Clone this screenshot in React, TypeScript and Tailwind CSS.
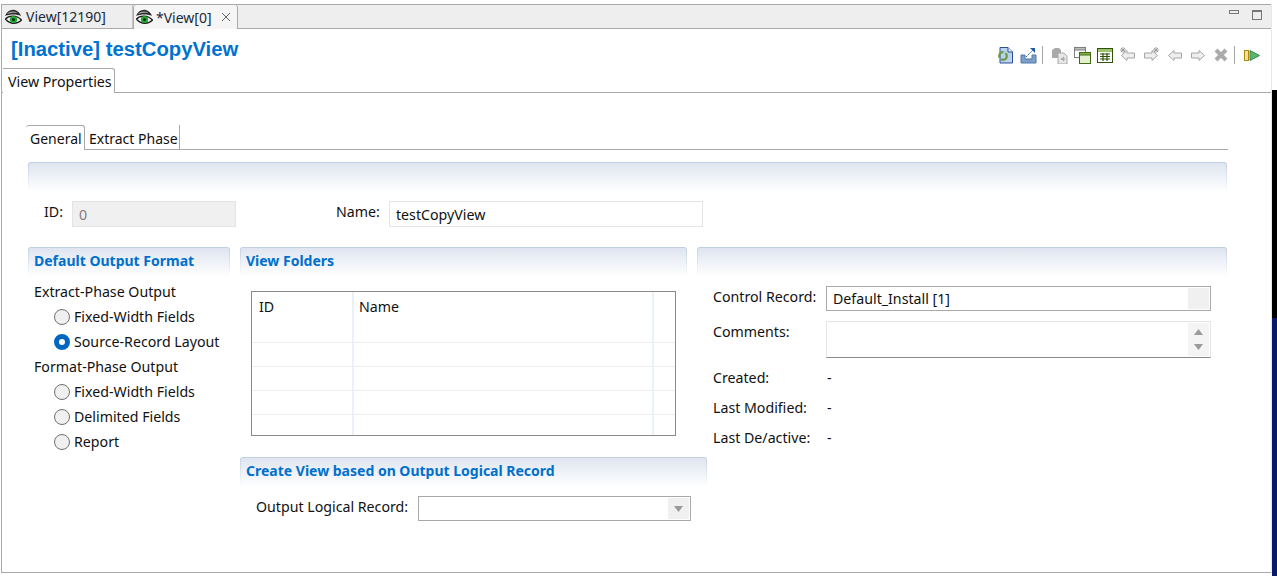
const font = { fontFamily: '"Noto Sans", sans-serif' };

function Eye() {
  return (
    <svg width="17" height="16" viewBox="0 0 17 16" className="shrink-0">
      <path d="M0 7 C2 2 6 0 10 1 C13 2 15 4 16 7 C12 5 5 5 0 7Z" fill="#2c2c2c" />
      <path d="M2 5 C5 2 9 2 13 4 C9 3.5 6 4 2 5Z" fill="#a8a8a8" />
      <path d="M0.5 10 C4 6 12 6 16.5 11 C13 15 5 16 0.5 10Z" fill="#f4f4f4" stroke="#1c1c1c" strokeWidth="1.3" />
      <circle cx="8.5" cy="10.5" r="3.6" fill="#23a32f" />
      <circle cx="8.5" cy="10.5" r="1.5" fill="#04330a" />
    </svg>
  );
}

function Close() {
  return (
    <svg width="10" height="10" viewBox="0 0 10 10" className="shrink-0">
      <path d="M1 1 L9 9 M9 1 L1 9" stroke="#666" strokeWidth="1" fill="none" />
    </svg>
  );
}

function GrayArrow({ dir, star }: { dir: 'left' | 'right'; star?: boolean }) {
  return (
    <svg width="16" height="16" viewBox="0 0 16 16" className={dir === 'right' ? '-scale-x-100' : ''}>
      <path d="M1.5 8.5 L7 3.5 V6 H14.5 V11 H7 V13.5Z" fill="#eeeeee" stroke="#a6a6a6" strokeWidth="1" />
      {star && <path d="M1 1 L5 5 M5 1 L1 5 M3 0 V6 M0 3 H6" stroke="#9e9e9e" strokeWidth="1" />}
    </svg>
  );
}

function Sep() {
  return <div className="w-px h-[18px] bg-[#a5a5a5]" />;
}

function Toolbar() {
  return (
    <div className="flex items-center h-[18px] mt-[13px]">
      <svg width="17" height="17" viewBox="0 0 17 17">
        <path d="M3 .5 H11 L15.5 5 V16 H3Z" fill="#b8d2ef" stroke="#2f4f9a" />
        <path d="M11 .5 V5 H15.5" fill="#e8f0fa" stroke="#2f4f9a" />
        <circle cx="6" cy="9" r="3.8" fill="none" stroke="#6f9a3a" strokeWidth="2.2" strokeDasharray="8 2" />
      </svg>
      <svg width="17" height="17" viewBox="0 0 17 17" className="ml-[6px]">
        <path d="M1 8 H5 V12 H12 V8 H16 V16 H1Z" fill="#7f9fc8" stroke="#4f78ad" />
        <path d="M6 10 L13 3" stroke="#1f5f9f" strokeDasharray="2 1" />
        <path d="M10 1 H15 V6Z" fill="#1f5f9f" />
      </svg>
      <div className="ml-[5px]"><Sep /></div>
      <svg width="17" height="17" viewBox="0 0 17 17" className="ml-[8px]">
        <path d="M1 3 L4 1 H8 L10 3 V11 H1Z" fill="#a9a9a9" />
        <path d="M7 6 H13 L16 9 V17 H7Z" fill="#e6e6e6" stroke="#a9a9a9" />
        <path d="M10 11 H12 V9 L14 12 L12 15 V13 H10Z" fill="#a9a9a9" />
      </svg>
      <svg width="17" height="17" viewBox="0 0 17 17" className="ml-[6px]">
        <rect x=".5" y=".5" width="11" height="10" fill="#fff" stroke="#7d7d7d" />
        <rect x=".5" y=".5" width="11" height="2.5" fill="#bdbdbd" stroke="#7d7d7d" />
        <rect x="5.5" y="5.5" width="11" height="11" fill="#e6efd0" stroke="#3f6b12" />
        <rect x="5.5" y="5.5" width="11" height="2.5" fill="#86b14a" stroke="#3f6b12" />
      </svg>
      <svg width="16" height="15" viewBox="0 0 16 15" className="ml-[6px]">
        <rect x=".5" y=".5" width="15" height="14" fill="#fff" stroke="#2f5208" />
        <rect x="1" y="1" width="14" height="3" fill="#9cc26a" />
        <path d="M3 6 H13 M3 8.5 H13 M3 11 H13 M6 5 V13 M10 5 V13" stroke="#2f5208" strokeWidth="1.2" />
      </svg>
      <div className="ml-[7px]"><GrayArrow dir="left" star /></div>
      <div className="ml-[7px]"><GrayArrow dir="right" star /></div>
      <div className="ml-[8px]"><GrayArrow dir="left" /></div>
      <div className="ml-[7px]"><GrayArrow dir="right" /></div>
      <svg width="14" height="14" viewBox="0 0 14 14" className="ml-[8px]">
        <path d="M2 2 L12 12 M12 2 L2 12" stroke="#ababab" strokeWidth="4" />
      </svg>
      <div className="ml-[6px]"><Sep /></div>
      <svg width="16" height="11" viewBox="0 0 16 11" className="ml-[9px]">
        <rect x=".5" y=".5" width="4" height="10" fill="#f4df9a" stroke="#b08a10" />
        <path d="M6 .5 L15.5 5.5 L6 10.5Z" fill="#5cb36a" stroke="#2f8a5a" />
      </svg>
    </div>
  );
}

function SectionHead({ title, className }: { title?: string; className: string }) {
  return (
    <div className={`rounded-t-[3px] bg-gradient-to-b from-[#bfcfdf] to-white px-px pt-px ${className}`}>
      <div className="h-full rounded-t-[2px] bg-gradient-to-b from-[#dfe5f0] to-white pl-[5px] pt-[2px] text-[14px] leading-[22px] font-bold text-[#0070cc]">
        {title}
      </div>
    </div>
  );
}

function Radio({ label, checked }: { label: string; checked?: boolean }) {
  return (
    <div className="flex items-center h-[25px] pl-[20px] gap-[4px]">
      {checked ? (
        <span className="w-4 h-4 rounded-full border-[5px] border-[#0067c0] bg-white" />
      ) : (
        <span className="w-4 h-4 rounded-full border border-[#707070] bg-[#f0f0f0]" />
      )}
      <span>{label}</span>
    </div>
  );
}

function TableRow({ last }: { last?: boolean }) {
  return (
    <div className={`flex h-[24px] ${last ? '' : 'border-b border-[#eeeeee]'}`}>
      <div className="w-[102px] border-r-2 border-[#eaf0f8]" />
      <div className="w-[300px] border-r-2 border-[#eaf0f8]" />
    </div>
  );
}

function Info({ label, top }: { label: string; top: string }) {
  return (
    <div className={`flex leading-[20px] ${top}`}>
      <span className="w-[114px]">{label}</span>
      <span>-</span>
    </div>
  );
}

function Triangle({ up }: { up?: boolean }) {
  return (
    <svg width="9" height="6" viewBox="0 0 9 6">
      <path d={up ? 'M4.5 0 L9 6 H0Z' : 'M0 0 H9 L4.5 6Z'} fill="#9a9a9a" />
    </svg>
  );
}

export default function App() {
  return (
    <div className="flex w-[1277px] h-[576px] bg-white text-[14.2px] text-[#111]" style={font}>
      <div className="w-px" />
      <div className="w-[1270px] h-[569px] mt-[4px] border-t border-l border-b border-[#a9a9a9] flex flex-col">
        {/* editor tabs */}
        <div className="h-[24px] bg-[#eeeeee] border-b border-[#a9a9a9] flex items-stretch shrink-0">
          <div className="w-[131px] flex items-center pl-[3px] gap-[4px] border-r border-[#c4c4c4]">
            <Eye />
            <span className="text-[#1a2a3a] text-[14px]">View[12190]</span>
          </div>
          <div className="w-[105px] h-[24px] flex items-center pl-[2px] bg-[#f5f5f5] border-x border-[#a9a9a9] rounded-t-[3px] gap-[3px]">
            <Eye />
            <span className="text-[#1a2a3a] text-[14px]">*View[0]</span>
            <span className="ml-[6px]"><Close /></span>
          </div>
          <div className="ml-auto flex items-start pt-[5px] pr-[9px] gap-[13px]">
            <div className="w-[10px] h-[4px] border border-[#777]" />
            <div className="w-[10px] h-[10px] border border-[#777] border-t-2" />
          </div>
        </div>

        {/* title + toolbar */}
        <div className="h-[39px] flex items-center justify-between pl-[9px] pr-[11px] shrink-0">
          <h1 className="text-[20.3px] font-bold text-[#0072d2] mt-[2px]" style={{ fontFamily: '"Liberation Sans", sans-serif' }}>
            [Inactive] testCopyView
          </h1>
          <Toolbar />
        </div>

        {/* View Properties tab */}
        <div className="h-[25px] flex shrink-0 border-b border-[#a9a9a9]">
          <div className="ml-px w-[112px] h-[25px] pl-[5px] leading-[25px] border-t border-r border-[#a9a9a9] rounded-tr-[3px] bg-white">
            View Properties
          </div>
        </div>

        <div className="flex-1 pl-[26px] pt-[32px] w-[1226px]">
          {/* General / Extract Phase */}
          <div className="h-[25px] -ml-[2px] w-[1202px] flex border-b border-[#a9a9a9] text-[14px]">
            <div className="w-[59px] h-[25px] pl-[4px] leading-[25px] border-t border-r border-[#a9a9a9] rounded-t-[3px] bg-white">General</div>
            <div className="w-[95px] pl-[4px] leading-[27px] border-r border-[#a9a9a9]">Extract Phase</div>
          </div>

          <SectionHead className="mt-[12px] h-[30px] w-[1199px]" />

          <div className="flex items-center h-[26px] mt-[9px]">
            <span className="w-[44px] pl-[16px] -mt-[4px]">ID:</span>
            <div className="w-[164px] h-[26px] bg-[#f0f0f0] border border-[#e4e4e4] pl-[6px] leading-[26px] text-[#808080]">0</div>
            <span className="ml-[100px] w-[53px] -mt-[4px]">Name:</span>
            <div className="w-[314px] h-[26px] border border-[#e4e4e4] bg-white pl-[6px] leading-[26px]">testCopyView</div>
          </div>

          <div className="flex mt-[20px]">
            <div className="w-[202px] shrink-0">
              <SectionHead title="Default Output Format" className="h-[30px]" />
              <div className="pl-[6px] pt-[2px]">
                <div className="h-[25px] leading-[25px]">Extract-Phase Output</div>
                <Radio label="Fixed-Width Fields" />
                <Radio label="Source-Record Layout" checked />
                <div className="h-[25px] leading-[25px]">Format-Phase Output</div>
                <Radio label="Fixed-Width Fields" />
                <Radio label="Delimited Fields" />
                <Radio label="Report" />
              </div>
            </div>

            <div className="w-[447px] ml-[10px] shrink-0">
              <SectionHead title="View Folders" className="h-[30px]" />
              <div className="ml-[11px] mt-[14px] w-[425px] h-[145px] border border-[#8a8a8a] overflow-hidden">
                <div className="flex h-[51px] border-b border-[#eeeeee]">
                  <div className="w-[102px] border-r-2 border-[#eaf0f8] pl-[7px] pt-[4px]">ID</div>
                  <div className="w-[300px] border-r-2 border-[#eaf0f8] pl-[5px] pt-[4px]">Name</div>
                </div>
                <TableRow />
                <TableRow />
                <TableRow />
                <TableRow last />
              </div>
              <SectionHead title="Create View based on Output Logical Record" className="mt-[21px] h-[30px] w-[467px]" />
              <div className="flex items-center mt-[9px] pl-[16px]">
                <span className="w-[162px] shrink-0 -mt-[4px]">Output Logical Record:</span>
                <div className="w-[273px] shrink-0 h-[25px] border border-[#a9a9a9] bg-white flex justify-end p-px">
                  <div className="w-[21px] bg-[#f0f0f0] flex items-center justify-center"><Triangle /></div>
                </div>
              </div>
            </div>

            <div className="w-[530px] ml-[10px] shrink-0">
              <SectionHead className="h-[30px]" />
              <div className="pl-[16px] pt-[9px]">
                <div className="flex items-center">
                  <span className="w-[113px] -mt-[4px]">Control Record:</span>
                  <div className="w-[385px] h-[25px] border border-[#a9a9a9] bg-white flex justify-between pl-[6px] p-px">
                    <span className="leading-[21px]">Default_Install [1]</span>
                    <div className="w-[21px] bg-[#f0f0f0]" />
                  </div>
                </div>
                <div className="flex mt-[10px]">
                  <span className="w-[113px]">Comments:</span>
                  <div className="w-[385px] h-[37px] border border-[#e4e4e4] border-b-[#8a8a8a] bg-white flex justify-end p-px">
                    <div className="w-[21px] bg-[#f4f4f4] flex flex-col items-center justify-between py-[6px]">
                      <Triangle up />
                      <Triangle />
                    </div>
                  </div>
                </div>
                <Info label="Created:" top="mt-[10px]" />
                <Info label="Last Modified:" top="mt-[10px]" />
                <Info label="Last De/active:" top="mt-[10px]" />
              </div>
            </div>
          </div>
        </div>
      </div>

      {/* neighbouring window edge */}
      <div className="w-[1px] h-[569px] mt-[4px] bg-[#e8e8e8]" />
      <div className="flex-1 flex flex-col">
        <div className="h-[90px]" />
        <div className="h-[228px] bg-black" />
        <div className="flex-1 bg-[#0a1a6a]" />
      </div>
    </div>
  );
}
